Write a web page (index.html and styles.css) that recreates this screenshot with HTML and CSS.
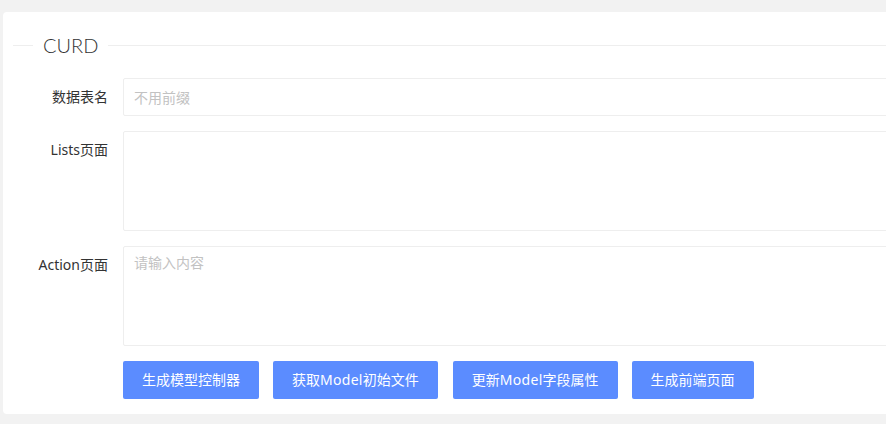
FILE: index.html
```html
<!DOCTYPE html>
<html lang="zh">
<head>
<meta charset="utf-8">
<title>CURD</title>
<link rel="stylesheet" href="styles.css">
</head>
<body>
<div class="card">
  <fieldset class="field-title">
    <legend>CURD</legend>
  </fieldset>
  <form class="form">
    <div class="form-item">
      <label class="form-label">数据表名</label>
      <div class="input-block">
        <input class="input" type="text" placeholder="不用前缀">
      </div>
    </div>
    <div class="form-item">
      <label class="form-label">Lists页面</label>
      <div class="input-block">
        <textarea class="textarea"></textarea>
      </div>
    </div>
    <div class="form-item">
      <label class="form-label">Action页面</label>
      <div class="input-block">
        <textarea class="textarea" placeholder="请输入内容"></textarea>
      </div>
    </div>
    <div class="form-item last">
      <div class="input-block buttons">
        <button type="button" class="btn">生成模型控制器</button>
        <button type="button" class="btn">获取<span class="latin">Model</span>初始文件</button>
        <button type="button" class="btn">更新<span class="latin">Model</span>字段属性</button>
        <button type="button" class="btn">生成前端页面</button>
      </div>
    </div>
  </form>
</div>
</body>
</html>
```
FILE: styles.css
```css
html, body {
  margin: 0;
  padding: 0;
  background: #f2f2f2;
  overflow: hidden;
}
body {
  padding: 12px 0 0 3px;
  font-family: "Noto Sans", "Noto Sans CJK SC", sans-serif;
  font-size: 14px;
  color: #333;
}
.card {
  width: 905px;
  box-sizing: border-box;
  background: #fff;
  border-radius: 4px;
  padding: 10px 10px 15px 10px;
}
.field-title {
  margin: 10px 0 20px 0;
  padding: 0;
  border: 0;
  border-top: 1px solid #eee;
  min-width: 0;
}
.field-title legend {
  margin-left: 20px;
  padding: 0 10px;
  font-family: "Lato", "Noto Sans", sans-serif;
  font-size: 20px;
  font-weight: 300;
  line-height: 26px;
  color: #333;
}
.form {
  margin: 0;
}
.form-item {
  display: flex;
  margin-bottom: 15px;
}
.form-item.last {
  margin-bottom: 0;
}
.form-label {
  width: 80px;
  flex: none;
  padding: 9px 15px;
  line-height: 20px;
  text-align: right;
  color: #333;
}
.buttons {
  margin-left: 110px;
}
.input-block {
  flex: 1;
  display: flex;
}
.input, .textarea {
  width: 100%;
  box-sizing: border-box;
  border: 1px solid #eee;
  border-radius: 2px;
  background: #fff;
  font-family: inherit;
  font-size: 14px;
  color: #333;
  outline: none;
}
.input {
  height: 38px;
  padding: 0 10px;
  line-height: 36px;
}
.textarea {
  height: 100px;
  padding: 6px 10px;
  line-height: 20px;
  resize: none;
}
.input::placeholder, .textarea::placeholder {
  color: #c2c2c2;
}
.btn {
  height: 38px;
  padding: 0 18px;
  margin-right: 14px;
  border: 1px solid transparent;
  border-radius: 2px;
  background: #5b8cff;
  color: #fff;
  font-family: inherit;
  font-size: 14px;
  line-height: 36px;
  white-space: nowrap;
  cursor: pointer;
}
.btn .latin {
  letter-spacing: 0.3px;
}
.btn + .btn + .btn {
  margin-left: 1px;
  margin-right: 13px;
}
```
